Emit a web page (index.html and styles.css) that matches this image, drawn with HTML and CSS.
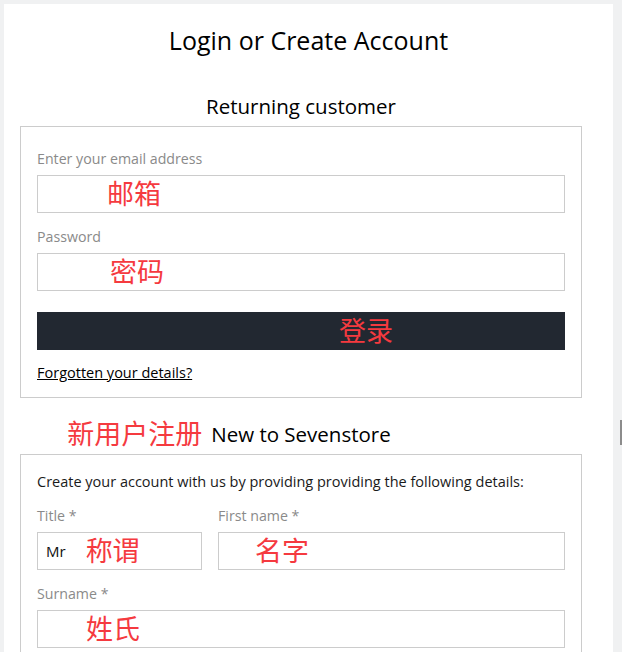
FILE: index.html
```html
<!DOCTYPE html>
<html lang="en">
<head>
<meta charset="utf-8">
<title>Login or Create Account</title>
<link rel="stylesheet" href="styles.css">
</head>
<body>
<div class="panel">
  <h1 class="page-title">Login or Create Account</h1>

  <h2 class="section-title">Returning customer</h2>
  <div class="box box-login">
    <div class="label">Enter your email address</div>
    <div class="field"><span class="note note-email">邮箱</span></div>
    <div class="label">Password</div>
    <div class="field"><span class="note note-pass">密码</span></div>
    <div class="btn"><span class="note">登录</span></div>
    <a class="forgot" href="#">Forgotten your details?</a>
  </div>

  <h2 class="section-title section-new"><span class="title-wrap"><span class="note note-reg">新用户注册</span>New to Sevenstore</span></h2>
  <div class="box box-new">
    <div class="intro">Create your account with us by providing providing the following details:</div>
    <div class="row">
      <div class="col col-title">
        <div class="label">Title *</div>
        <div class="field"><span class="value">Mr</span><span class="note note-title">称谓</span></div>
      </div>
      <div class="col col-first">
        <div class="label">First name *</div>
        <div class="field"><span class="note note-first">名字</span></div>
      </div>
    </div>
    <div class="label">Surname *</div>
    <div class="field"><span class="note note-sur">姓氏</span></div>
  </div>
</div>
<div class="scroll-mark"></div>
</body>
</html>
```

FILE: styles.css
```css
html, body {
  margin: 0;
  padding: 0;
  background: #f0f1f2;
  height: 100%;
  overflow: hidden;
}

body {
  font-family: "Open Sans", "Noto Sans", "Noto Sans CJK SC", sans-serif;
  color: #000;
  position: relative;
}

.panel {
  margin: 4px 0 0 4px;
  width: 609px;
  background: #fff;
  padding: 20px 31px 0 16px;
  box-sizing: border-box;
  min-height: 660px;
}

.page-title {
  margin: 0;
  font-weight: 400;
  font-size: 25px;
  line-height: 32px;
  text-align: center;
  margin-left: 15px;
}

.section-title {
  margin: 36px 0 6px;
  font-weight: 400;
  font-size: 20.5px;
  line-height: 28px;
  text-align: center;
}

.section-new {
  margin-top: 22px;
}

.title-wrap {
  position: relative;
  display: inline-block;
}

.box {
  border: 1px solid #cccccc;
  padding: 22px 16px 14px;
}

.box-new {
  padding-top: 17px;
  padding-bottom: 8px;
}

.label {
  font-size: 14.2px;
  line-height: 20px;
  color: #8a8a8a;
  margin-bottom: 6px;
}

.field {
  height: 38px;
  border: 1px solid #cccccc;
  box-sizing: border-box;
  display: flex;
  align-items: center;
  margin-bottom: 14px;
}

.note {
  color: #f53a3f;
  font-family: "Noto Sans CJK SC", sans-serif;
  font-size: 27px;
  line-height: 1;
  margin-bottom: 3px;
}

.note-email { margin-left: 69px; }
.note-pass { margin-left: 72px; }
.note-first { margin-left: 36px; }
.note-sur { margin-left: 48px; }
.note-title { margin-left: 20px; }

.value {
  font-size: 15px;
  color: #111;
  margin-left: 8px;
}

.note-reg {
  position: absolute;
  right: 100%;
  margin-right: 9px;
  top: -1px;
  white-space: nowrap;
  line-height: 28px;
}

.btn {
  height: 38px;
  background: #222831;
  margin-top: 21px;
  display: flex;
  align-items: center;
  padding-left: 302px;
}

.forgot {
  display: inline-block;
  margin-top: 13px;
  font-size: 14.5px;
  line-height: 20px;
  color: #000;
  text-decoration: underline;
}

.intro {
  font-size: 14.5px;
  line-height: 20px;
  color: #1a1a1a;
  margin-bottom: 14px;
}

.row {
  display: flex;
  gap: 16px;
}

.col-title { width: 165px; }
.col-first { flex: 1; }

.scroll-mark {
  position: absolute;
  left: 620px;
  top: 420px;
  width: 2px;
  height: 25px;
  background: #8c8c8c;
}
```
